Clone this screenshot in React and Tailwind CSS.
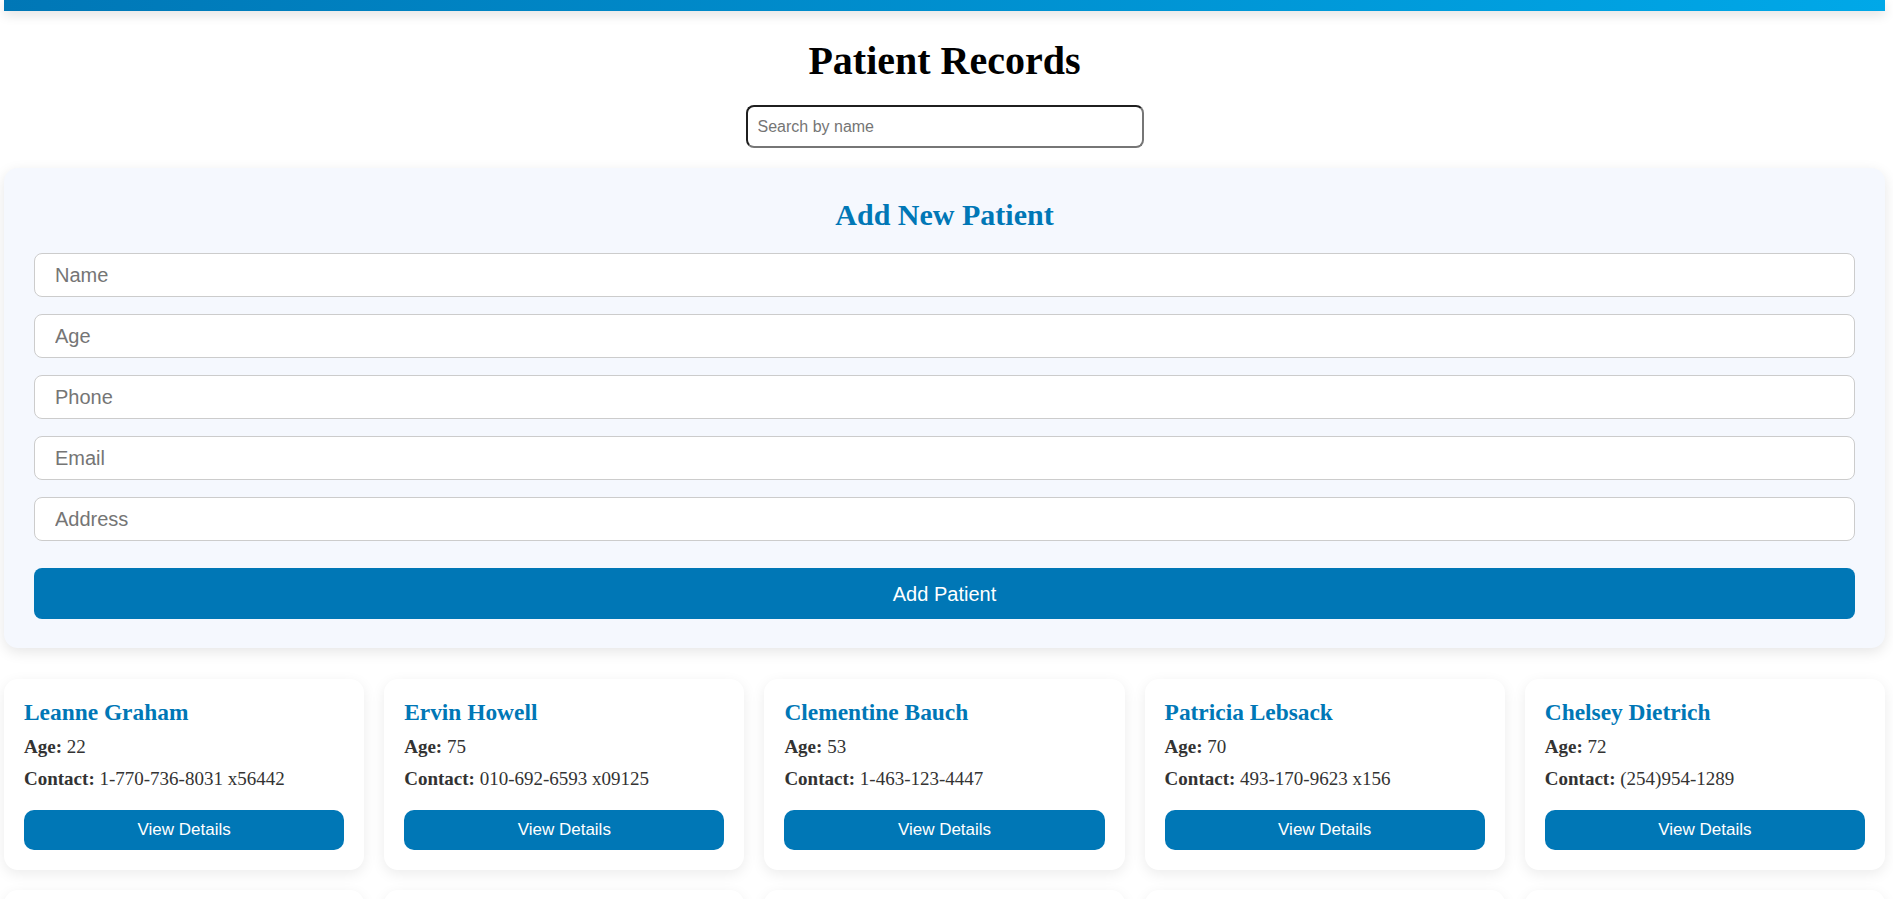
import React from "react";

const patients = [
  { name: "Leanne Graham", age: 22, phone: "1-770-736-8031 x56442" },
  { name: "Ervin Howell", age: 75, phone: "010-692-6593 x09125" },
  { name: "Clementine Bauch", age: 53, phone: "1-463-123-4447" },
  { name: "Patricia Lebsack", age: 70, phone: "493-170-9623 x156" },
  { name: "Chelsey Dietrich", age: 72, phone: "(254)954-1289" },
  { name: "Mrs. Dennis Schulist", age: 41, phone: "1-477-935-8478 x6430" },
  { name: "Kurtis Weissnat", age: 36, phone: "210.067.6132" },
  { name: "Nicholas Runolfsdottir V", age: 64, phone: "586.493.6943 x140" },
  { name: "Glenna Reichert", age: 29, phone: "(775)976-6794 x41206" },
  { name: "Clementina DuBuque", age: 58, phone: "024-648-3804" },
];

const fields = ["Name", "Age", "Phone", "Email", "Address"];

export default function App() {
  return (
    <div className="min-h-screen bg-white font-['Liberation_Serif',serif]">
      <div className="ml-[4px] mr-[8px] pb-10">
        <div className="h-[11px] bg-gradient-to-r from-[#0077b6] to-[#00a8e8] shadow-[0_4px_12px_rgba(0,0,0,0.12)]" />
        <h1 className="mt-[27px] mb-[21px] text-center text-[40px] font-bold leading-[46px] text-black">
          Patient Records
        </h1>
        <div className="flex justify-center">
          <input
            type="text"
            placeholder="Search by name"
            className="h-[43px] w-[398px] rounded-[8px] border-2 border-t-[#1f1f1f] border-l-[#1f1f1f] border-r-[#767676] border-b-[#767676] bg-white px-[10px] font-['Liberation_Sans',sans-serif] text-[16px] text-black outline-none placeholder:text-[#757575]"
          />
        </div>

        <div className="mt-[20px] rounded-[14px] bg-[#f5f8fe] p-[30px] pb-[29px] shadow-[0_4px_14px_rgba(0,0,0,0.1)]">
          <h2 className="mb-[21px] text-center text-[30px] font-bold leading-[34px] text-[#0077b6]">
            Add New Patient
          </h2>
          <div className="flex flex-col gap-[17px]">
            {fields.map((f) => (
              <input
                key={f}
                type="text"
                placeholder={f}
                className="h-[44px] w-full rounded-[8px] border border-[#cccccc] bg-white px-[20px] font-['Liberation_Sans',sans-serif] text-[20px] text-black outline-none placeholder:text-[#757575]"
              />
            ))}
          </div>
          <button className="mt-[27px] h-[51px] w-full rounded-[8px] bg-[#0077b6] font-['Liberation_Sans',sans-serif] text-[20px] text-white">
            Add Patient
          </button>
        </div>

        <div className="mt-[31px] grid grid-cols-5 gap-[20px]">
          {patients.map((p) => (
            <div
              key={p.name}
              className="flex flex-col rounded-[14px] bg-white p-[20px] shadow-[0_4px_14px_rgba(0,0,0,0.08)]"
            >
              <div className="text-[23.4px] font-bold leading-[27px] text-[#0077b6]">
                {p.name}
              </div>
              <div className="mt-[10px] text-[19px] leading-[22px] text-[#333333]">
                <span className="font-bold">Age:</span> {p.age}
              </div>
              <div className="mt-[10px] text-[19px] leading-[22px] text-[#333333]">
                <span className="font-bold">Contact:</span> {p.phone}
              </div>
              <button className="mt-[20px] h-[40px] w-full rounded-[10px] bg-[#0077b6] font-['Liberation_Sans',sans-serif] text-[17px] text-white">
                View Details
              </button>
            </div>
          ))}
        </div>
      </div>
    </div>
  );
}
